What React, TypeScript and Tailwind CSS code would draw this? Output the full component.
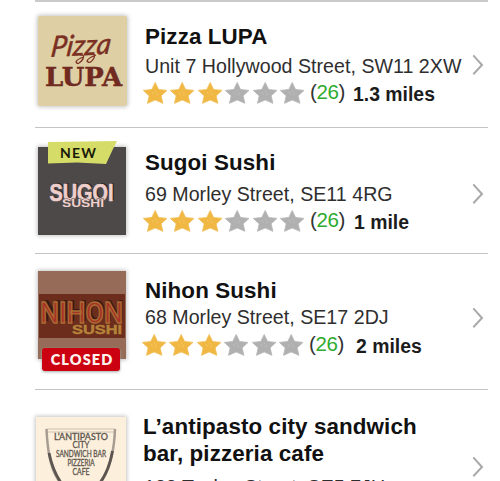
import type { ReactNode } from "react";

const STAR =
  "M12.2 0.5 L15.6 7.5 L24 8.4 L18.1 13.8 L19.9 21.3 L12.2 17.9 L4.5 21.3 L6.2 13.8 L0.3 8.4 L8.8 7.5 Z";

function Star({ on }: { on: boolean }) {
  return (
    <svg className="h-[22px] w-[24px] shrink-0" viewBox="0 0 24 22">
      <path d={STAR} fill={on ? "#f0b742" : "#b0b0b0"} stroke={on ? "#f2c05a" : "#b8b8b8"} strokeWidth="0.9" strokeLinejoin="round" />
      <path d="M9 10 l1.5 2.5 M12 8.500 l1 2 M14.500 11 l-1 2.500" fill="none" stroke={on ? "#f5c765" : "#bdbdbd"} strokeWidth="0.9" />
    </svg>
  );
}

function Chevron({ className }: { className: string }) {
  return (
    <svg className={`h-[22px] w-[12px] shrink-0 ${className}`} viewBox="0 0 12 22" fill="none">
      <path d="M1.300 1.300 L10 11 L1.300 20.300" stroke="#a9a9a9" strokeWidth="2" />
    </svg>
  );
}

function Rating({ className, distance, gap }: { className: string; distance: string; gap: string }) {
  return (
    <div className={`flex h-6 items-start ${className}`}>
      <div className="flex w-[161px] justify-between pt-[1.600px]">
        {[0, 1, 2, 3, 4, 5].map((i) => (
          <Star key={i} on={i < 3} />
        ))}
      </div>
      <span className="ml-[6px] w-[36px] text-[20.500px] leading-6 tracking-[-0.4px] text-[#333]">
        (<span className="text-[#2eab2e]">26</span>)
      </span>
      <span className={`pt-[2px] text-[19.4px] leading-6 font-bold text-[#1c1c1c] ${gap}`}>{distance}</span>
    </div>
  );
}

function Title({ children, className = "leading-7" }: { children: ReactNode; className?: string }) {
  return <h2 className={`text-[22.4px] font-bold tracking-[0.100px] text-[#111] ${className}`}>{children}</h2>;
}

function Address({ children, className }: { children: ReactNode; className: string }) {
  return <p className={`text-[19.6px] leading-6 tracking-[0.030px] whitespace-nowrap text-[#2e2e2e] ${className}`}>{children}</p>;
}

function LupaLogo() {
  return (
    <svg className="h-[90px] w-[89px] rounded-[2px] bg-[#ded0a4] shadow-[0_0_4px_1px_#c4c4c4]" viewBox="0 0 89 90">
      <g transform="translate(12 41) rotate(-3) skewX(-10)">
        <text x="0" y="0" fontFamily="Lato, sans-serif" fontStyle="italic" fontSize="29" fontWeight="500" textLength="60" lengthAdjust="spacingAndGlyphs" fill="#7b3023" stroke="#7b3023" strokeWidth="0.300">
          Pizza
        </text>
      </g>
      <path d="M42 39 q5 -1 3 4 q-5 7 -7 3 q1 -3 8 -5 M53 38 q5 -1 3 4 q-4 7 -7 3 q1 -3 9 -6" fill="none" stroke="#7b3023" strokeWidth="1.300" />
      <text x="7" y="69.500" fontFamily="'DejaVu Serif', serif" fontSize="25.500" fontWeight="700" textLength="77" lengthAdjust="spacingAndGlyphs" fill="#702a20" stroke="#702a20" strokeWidth="0.500">
        LUPA
      </text>
    </svg>
  );
}

function SugoiLogo() {
  return (
    <div className="relative h-[88px] w-[88px]">
      <svg className="h-[88px] w-[88px] bg-[#4c4948] shadow-[0_0_4px_1px_#c4c4c4]" viewBox="0 0 88 88" fontWeight="700">
        <g fontFamily="'Liberation Sans', sans-serif" fontSize="24.500">
          <text x="13" y="52.500" textLength="64" lengthAdjust="spacingAndGlyphs" fill="#2b2828">SUGOI</text>
          <text x="11.500" y="54" textLength="64" lengthAdjust="spacingAndGlyphs" fill="#efcfcb" stroke="#efcfcb" strokeWidth="0.700">SUGOI</text>
        </g>
        <text x="24" y="60" fontSize="11.500" fontFamily="'Liberation Sans', sans-serif" textLength="42" lengthAdjust="spacingAndGlyphs" fill="#efcfcb" stroke="#4c4948" strokeWidth="1.2" paintOrder="stroke">SUSHI</text>
      </svg>
      <svg className="absolute -top-[7px] left-[9px] h-[26px] w-[72px]" viewBox="0 0 72 26">
        <path d="M1 2 L70 1 L66 9 L59 24 L30 22.500 L1 23.500 Z" fill="#d5dc68" />
        <text x="13" y="17.500" fontFamily="Lato, sans-serif" fontWeight="700" fontSize="14" letterSpacing="1.200" fill="#191907">NEW</text>
      </svg>
    </div>
  );
}

function NihonLogo() {
  return (
    <div className="relative h-[88px] w-[88px]">
      <svg className="h-[88px] w-[88px] bg-[#966b58] shadow-[0_0_4px_1px_#c4c4c4]" viewBox="0 0 88 88" fontFamily="Roboto, sans-serif">
        <rect x="1" y="23" width="86" height="44" fill="#6d2d1c" />
        <text x="5" y="50" fontSize="30" fontWeight="500" textLength="81" lengthAdjust="spacingAndGlyphs" fill="#3a1c14">NIHON</text>
        <text x="2" y="52" fontSize="30" fontWeight="500" textLength="83" lengthAdjust="spacingAndGlyphs" fill="#a83226" stroke="#a96c33" strokeWidth="1.400">NIHON</text>
        <text x="34" y="63" fontSize="13.500" fontWeight="700" fontFamily="'Liberation Sans', sans-serif" textLength="50" lengthAdjust="spacingAndGlyphs" fill="#b5843a" stroke="#b5843a" strokeWidth="0.400">SUSHI</text>
      </svg>
      <span className="absolute top-[77px] left-[4px] flex h-[23px] w-[78px] items-center justify-center rounded-[3px] bg-[#cb0010] pl-[2px] font-[Lato,sans-serif] text-[14.500px] font-extrabold tracking-[1.100px] text-[#fff0ed] shadow-[0_1px_3px_#a6a6a6]">
        CLOSED
      </span>
    </div>
  );
}

function AntipastoLogo() {
  return (
    <svg className="h-[94px] w-[90px] bg-[#fcf0dc] shadow-[0_0_4px_1px_#c4c4c4]" viewBox="0 0 90 94">
      <path d="M10.500 12 H79 M10.500 15 H79" stroke="#ccc1b1" strokeWidth="1" fill="none" />
      <path d="M10.500 12 Q12 45 20 59 Q28 74 44 78 Q60 74 68 59 Q78 42 79 12" fill="none" stroke="#a69c91" strokeWidth="2.500" />
      <path d="M13 36 Q17 55 26 67 M76.500 34 Q73 54 64 66" fill="none" stroke="#5c5550" strokeWidth="2.800" />
      <g fontFamily="Lato, sans-serif" textAnchor="middle" fill="#5f574f" stroke="#5f574f" strokeWidth="0.300">
        <text x="45" y="23" fontSize="9.800" fontWeight="500" textLength="54" lengthAdjust="spacingAndGlyphs">L’ANTIPASTO</text>
        <text x="45" y="31" fontSize="8.500" textLength="17" lengthAdjust="spacingAndGlyphs">CITY</text>
        <text x="45" y="40" fontSize="8.500" textLength="50" lengthAdjust="spacingAndGlyphs">SANDWICH BAR</text>
        <text x="45" y="49" fontSize="8.500" textLength="27" lengthAdjust="spacingAndGlyphs">PIZZERIA</text>
        <text x="45" y="58" fontSize="8.500" textLength="17" lengthAdjust="spacingAndGlyphs">CAFE</text>
      </g>
    </svg>
  );
}

export default function App() {
  return (
    <main className="h-[481px] w-[500px] overflow-hidden bg-white pr-[12px] pl-[35px] font-['Liberation_Sans',Arial,sans-serif]">
      <article className="flex h-[127px] border-t-2 border-[#cacaca]">
        <div className="w-[110px] shrink-0 pt-[14px] pl-[3px]">
          <LupaLogo />
        </div>
        <div className="min-w-0 flex-1 pt-[21px]">
          <Title>Pizza LUPA</Title>
          <Address className="mt-[3px]">Unit 7 Hollywood Street, SW11 2XW</Address>
          <Rating className="mt-[2px] -ml-[2px]" distance="1.3 miles" gap="ml-[7px]" />
        </div>
        <Chevron className="mt-[52px] mr-[4px]" />
      </article>

      <article className="flex h-[126px] border-t border-[#c4c4c4]">
        <div className="w-[110px] shrink-0 pt-[19px] pl-[3px]">
          <SugoiLogo />
        </div>
        <div className="min-w-0 flex-1 pt-[21px]">
          <Title>Sugoi Sushi</Title>
          <Address className="mt-[5px]">69 Morley Street, SE11 4RG</Address>
          <Rating className="mt-[2px] -ml-[2px]" distance="1 mile" gap="ml-[8px]" />
        </div>
        <Chevron className="mt-[55px] mr-[4px]" />
      </article>

      <article className="flex h-[136px] border-t border-[#c4c4c4]">
        <div className="w-[110px] shrink-0 pt-[17px] pl-[3px]">
          <NihonLogo />
        </div>
        <div className="min-w-0 flex-1 pt-[23px]">
          <Title>Nihon Sushi</Title>
          <Address className="">68 Morley Street, SE17 2DJ</Address>
          <Rating className="mt-[3px] -ml-[3px]" distance="2 miles" gap="ml-[11px]" />
        </div>
        <Chevron className="mt-[53px] mr-[4px]" />
      </article>

      <article className="flex h-[126px] border-t border-[#c4c4c4]">
        <div className="w-[108px] shrink-0 pt-[27px] pl-[1px]">
          <AntipastoLogo />
        </div>
        <div className="min-w-0 flex-1 pt-[23px]">
          <Title className="leading-[27px]">
            L’antipasto city sandwich
            <br />
            bar, pizzeria cafe
          </Title>
          <Address className="mt-[8px] ml-px">133 Tooley Street, SE5 7JU</Address>
        </div>
        <Chevron className="mt-[66px] mr-[4px]" />
      </article>
    </main>
  );
}
